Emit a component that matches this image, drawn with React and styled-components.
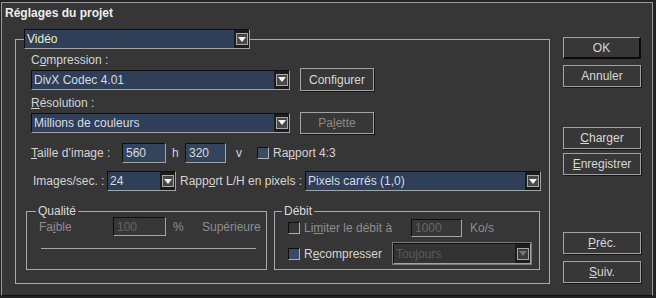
import React from 'react';
import styled, { createGlobalStyle } from 'styled-components';

const Global = createGlobalStyle`
  html, body { margin: 0; padding: 0; background: #232323; }
  body { font-family: "Liberation Sans", Arial, sans-serif; font-size: 12px; color: #d4d4d4; }
  * { box-sizing: border-box; }
`;

const Window = styled.div`
  width: 652px;
  height: 294px;
  margin: 2px 0 0 1px;
  background: #363636;
  border: 1px solid #9a9a9a;
  border-bottom-color: #111;
  display: flex;
  flex-direction: column;
`;

const Title = styled.div`
  height: 26px;
  line-height: 20px;
  padding-left: 3px;
  font-weight: bold;
  color: #eeeeee;
`;

const Body = styled.div`
  display: flex;
  align-items: flex-start;
  padding-left: 13px;
  gap: 13px;
`;

const Group = styled.fieldset`
  margin: 0;
  padding: 0;
  min-width: 0;
  width: ${(p) => p.$w}px;
  height: ${(p) => p.$h}px;
  border: 1px solid #a9a9a9;
`;

const Legend = styled.legend`
  margin-left: ${(p) => p.$ml}px;
  padding: ${(p) => (p.$plain ? '0' : '0 2px')};
  line-height: 14px;
  color: #dadada;
`;

const Content = styled.div`
  padding: ${(p) => p.$pad};
  display: flex;
  flex-direction: column;
`;

const Label = styled.div`
  height: 15px;
  line-height: 15px;
  margin-top: ${(p) => p.$mt || 0}px;
`;

const Row = styled.div`
  display: flex;
  align-items: center;
  height: ${(p) => p.$h}px;
  margin-top: ${(p) => p.$mt || 0}px;
  margin-left: ${(p) => p.$ml || 0}px;
  gap: ${(p) => p.$gap || 0}px;
`;

const Cell = styled.span`
  display: inline-block;
  flex: none;
  width: ${(p) => (p.$w ? `${p.$w}px` : 'auto')};
  margin-left: ${(p) => p.$ml || 0}px;
  padding-left: ${(p) => p.$pl || 0}px;
  white-space: nowrap;
  color: ${(p) => (p.$disabled ? '#8e8e8e' : '#d4d4d4')};
`;

const U = styled.span`
  text-decoration: underline;
  text-underline-offset: 1px;
`;

const SelectBox = styled.div`
  flex: none;
  display: flex;
  width: ${(p) => p.$w}px;
  height: ${(p) => p.$h || 20}px;
  margin-left: ${(p) => p.$ml || 0}px;
  background: ${(p) => (p.$disabled ? '#333' : '#2f3f57')};
  border: 1px solid;
  border-color: #0e0e0e #a4a4a4 #a4a4a4 #0e0e0e;
  box-shadow: ${(p) => (p.$disabled ? '0 0 0 1px #7a7a7a' : 'none')};
`;

const SelectText = styled.span`
  flex: 1;
  padding-left: ${(p) => p.$pl || 2}px;
  display: flex;
  align-items: center;
  color: ${(p) => (p.$disabled ? '#5a5a5a' : p.$accent ? '#e9edc6' : '#d8dce4')};
  white-space: nowrap;
  overflow: hidden;
`;

const ArrowCell = styled.span`
  flex: none;
  width: 15px;
  background: #1c1c1c;
  display: flex;
  align-items: center;
  justify-content: center;
`;

const ArrowBox = styled.span`
  width: 12px;
  height: 12px;
  border: 1px solid #a8a8a8;
  background: ${(p) => (p.$disabled ? '#3c3c3c' : '#484848')};
  display: flex;
  align-items: center;
  justify-content: center;
`;

const Input = styled.div`
  flex: none;
  width: ${(p) => p.$w}px;
  height: ${(p) => p.$h || 20}px;
  margin-left: ${(p) => p.$ml || 0}px;
  padding-left: 3px;
  display: flex;
  align-items: center;
  background: ${(p) => (p.$disabled ? '#373737' : '#33445d')};
  border: 1px solid;
  border-color: #0e0e0e #a4a4a4 #a4a4a4 #0e0e0e;
  color: ${(p) => (p.$disabled ? '#666' : '#d8dce4')};
`;

const Check = styled.span`
  flex: none;
  width: 12px;
  height: 12px;
  background: ${(p) => (p.$filled ? '#3a4b63' : '#363636')};
  border: 1px solid;
  border-color: #0e0e0e #b0b0b0 #b0b0b0 #0e0e0e;
`;

const Button = styled.div`
  flex: none;
  width: ${(p) => p.$w || 78}px;
  height: ${(p) => p.$h || 22}px;
  margin-top: ${(p) => p.$mt || 0}px;
  margin-left: ${(p) => p.$ml || 0}px;
  display: flex;
  align-items: center;
  justify-content: center;
  background: #373737;
  border: 1px solid #a2a2a2;
  border-width: ${(p) => (p.$default ? '1px 2px 2px 1px' : '1px')};
  border-color: ${(p) => (p.$default ? '#a2a2a2 #0a0a0a #0a0a0a #a2a2a2' : '#a2a2a2')};
  box-shadow: ${(p) => (p.$default ? 'none' : '1px 1px 0 #141414')};
  color: ${(p) => (p.$disabled ? '#8a8a8a' : '#d8d8d8')};
`;

const ButtonCol = styled.div`
  display: flex;
  flex-direction: column;
  padding-top: 8px;
`;

const Slider = styled.div`
  width: 215px;
  height: 1px;
  margin: 12px 0 0 2px;
  background: #a4a4a4;
`;

const GroupsRow = styled.div`
  display: flex;
  gap: 7px;
  margin: 12px 0 0 -5px;
`;

const DebitGrid = styled.div`
  display: grid;
  grid-template-columns: 12px 85px auto;
  grid-template-rows: 18px 21px;
  column-gap: 4px;
  row-gap: 6px;
  align-items: center;
  margin-top: 1px;
`;

const Arrow = ({ disabled }) => (
  <ArrowCell>
    <ArrowBox $disabled={disabled}>
      <svg width="8" height="5" viewBox="0 0 8 5">
        <polygon points="0,0 8,0 4,5" fill={disabled ? '#777' : '#f4f4f4'} />
      </svg>
    </ArrowBox>
  </ArrowCell>
);

const Select = ({ w, h, ml, disabled, accent, pl, children }) => (
  <SelectBox $w={w} $h={h} $ml={ml} $disabled={disabled}>
    <SelectText $disabled={disabled} $accent={accent} $pl={pl}>{children}</SelectText>
    <Arrow disabled={disabled} />
  </SelectBox>
);

export default function App() {
  return (
    <>
      <Global />
      <Window>
        <Title>Réglages du projet</Title>
        <Body>
          <Group $w={535} $h={255}>
            <Legend $ml={8} $plain>
              <Select w={226} accent pl={2}>Vidéo</Select>
            </Legend>
            <Content $pad="4px 0 0 15px">
              <Label>C<U>o</U>mpression :</Label>
              <Row $h={23} $gap={10}>
                <Select w={259}>DivX Codec 4.01</Select>
                <Button $w={74} $h={23}>Configurer</Button>
              </Row>
              <Label $mt={5}><U>R</U>ésolution :</Label>
              <Row $h={23} $gap={10}>
                <Select w={259}>Millions de couleurs</Select>
                <Button $w={74} $h={22} $disabled>Pa<U>l</U>ette</Button>
              </Row>
              <Row $h={22} $mt={8}>
                <Cell $w={91}><U>T</U>aille d’image :</Cell>
                <Input $w={44}>560</Input>
                <Cell $w={19} $pl={6}>h</Cell>
                <Input $w={41}>320</Input>
                <Cell $w={31} $pl={10}>v</Cell>
                <Check $filled />
                <Cell $pl={4}>Ra<U>p</U>port 4:3</Cell>
              </Row>
              <Row $h={22} $mt={6}>
                <Cell $w={76} $pl={2}>Ima<U>g</U>es/sec. :</Cell>
                <Select w={69}>24</Select>
                <Cell $w={129} $pl={4}>Rapp<U>o</U>rt L/H en pixels :</Cell>
                <Select w={236}>Pixels carrés (1,0)</Select>
              </Row>
              <GroupsRow>
                <Group $w={241} $h={66}>
                  <Legend $ml={9}>Qualité</Legend>
                  <Content $pad="0 0 0 12px">
                    <Row $h={19} $mt={-1}>
                      <Cell $w={74} $disabled>Fa<U>i</U>ble</Cell>
                      <Input $w={53} $h={19} $disabled>100</Input>
                      <Cell $w={36} $pl={7} $disabled>%</Cell>
                      <Cell $disabled>Supérieure</Cell>
                    </Row>
                    <Slider />
                  </Content>
                </Group>
                <Group $w={266} $h={66}>
                  <Legend $ml={7}>Débit</Legend>
                  <Content $pad="0 0 0 13px">
                    <DebitGrid>
                      <Check />
                      <Cell $disabled>Li<U>m</U>iter le débit à</Cell>
                      <Row $h={18}>
                        <Input $w={51} $h={18} $ml={18} $disabled>1000</Input>
                        <Cell $ml={8} $disabled>Ko/s</Cell>
                      </Row>
                      <Check $filled />
                      <Cell>R<U>e</U>compresser</Cell>
                      <Select w={138} h={21} disabled>Toujours</Select>
                    </DebitGrid>
                  </Content>
                </Group>
              </GroupsRow>
            </Content>
          </Group>
          <ButtonCol>
            <Button $default>OK</Button>
            <Button $mt={6}>Annuler</Button>
            <Button $mt={40}><U>C</U>harger</Button>
            <Button $mt={4}><U>E</U>nregistrer</Button>
            <Button $mt={57}><U>P</U>réc.</Button>
            <Button $mt={7}><U>S</U>uiv.</Button>
          </ButtonCol>
        </Body>
      </Window>
    </>
  );
}
